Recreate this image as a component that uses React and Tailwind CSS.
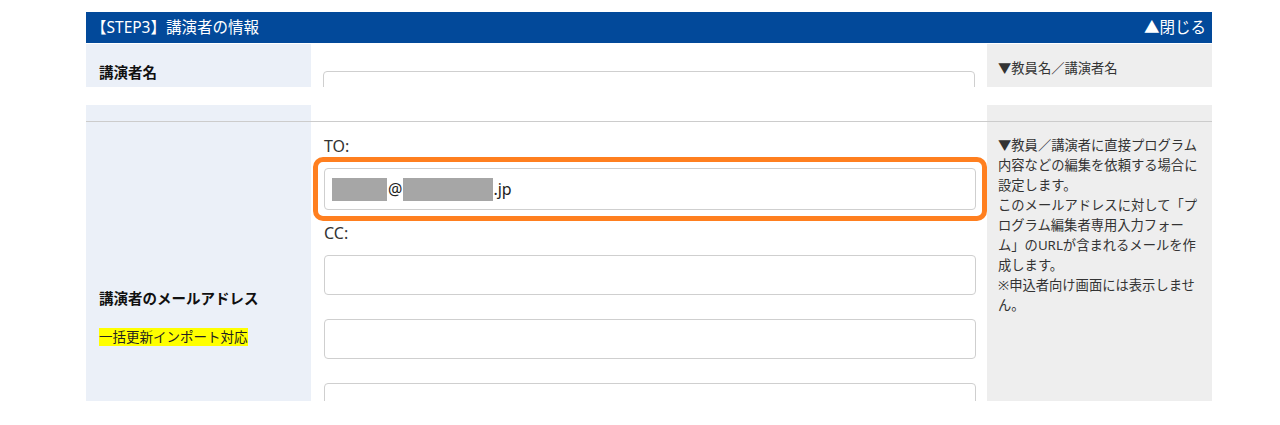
const font = { fontFamily: '"Noto Sans", "Noto Sans CJK JP", sans-serif' };

function TextBox({ children, className = "" }) {
  return (
    <div
      className={
        "h-[40px] w-full rounded-[4px] border border-[#cfcfcf] bg-white flex items-center px-[7px] text-[16px] text-[#222] " +
        className
      }
    >
      {children}
    </div>
  );
}

function Masked({ w }) {
  return <span className="inline-block h-[23px] bg-[#a6a6a6]" style={{ width: w }} />;
}

export default function App() {
  return (
    <div className="min-h-[425px] bg-white pt-[12px]" style={font}>
      <div className="ml-[86px] w-[1126px]">
        {/* section header */}
        <div className="h-[31px] bg-[#02499a] flex items-center justify-between pl-[5px] pr-[6px] text-white text-[15.5px]">
          <span>【STEP3】講演者の情報</span>
          <span>▲閉じる</span>
        </div>

        {/* 講演者名 */}
        <div className="mt-px flex h-[43px] overflow-hidden">
          <div className="w-[225px] shrink-0 bg-[#ebf0f8] pl-[13px] pt-[18px] text-[14.5px] font-bold leading-[20px] text-[#111]">
            講演者名
          </div>
          <div className="w-[676px] shrink-0 pl-[12px] pr-[12px] pt-[27px]">
            <TextBox />
          </div>
          <div className="w-[225px] shrink-0 bg-[#eeeeee] pl-[11px] pt-[14px] text-[13.3px] leading-[20px] text-[#333]">
            ▼教員名／講演者名
          </div>
        </div>

        <div className="mt-[18px] flex h-[16px]">
          <div className="w-[225px] bg-[#ebf0f8]" />
          <div className="w-[676px]" />
          <div className="w-[225px] bg-[#eeeeee]" />
        </div>
        <div className="h-px bg-[#cccccc]" />

        {/* 講演者のメールアドレス */}
        <div className="flex h-[279px] overflow-hidden">
          <div className="w-[225px] shrink-0 bg-[#ebf0f8] pl-[13px] pt-[166px]">
            <div className="text-[14.5px] font-bold leading-[20px] text-[#111]">講演者のメールアドレス</div>
            <div className="mt-[19px] text-[13.5px] leading-[20px] text-[#222]">
              <span className="bg-[#ffff00]">一括更新インポート対応</span>
            </div>
          </div>

          <div className="w-[676px] shrink-0 pl-[13px] pr-[11px] pt-[13px] text-[16px] text-[#333]">
            <div className="leading-[22px]">TO:</div>
            <div className="-mx-[11px] rounded-[10px] border-[5px] border-[#ff7f1f] p-[6px]">
              <TextBox className="h-[42px]">
                <Masked w={55} />
                <span className="px-[1px]">@</span>
                <Masked w={90} />
                <span>.jp</span>
              </TextBox>
            </div>
            <div className="mt-[1px] leading-[22px]">CC:</div>
            <div className="mt-[11px] flex flex-col gap-[24px]">
              <TextBox />
              <TextBox />
              <TextBox />
            </div>
          </div>

          <div className="w-[225px] shrink-0 bg-[#eeeeee] pl-[11px] pt-[13px] text-[13.3px] leading-[20px] text-[#333] whitespace-nowrap">
            <p>
              ▼教員／講演者に直接プログラム
              <br />
              内容などの編集を依頼する場合に
              <br />
              設定します。
            </p>
            <p>
              このメールアドレスに対して「プ
              <br />
              ログラム編集者専用入力フォー
              <br />
              ム」のURLが含まれるメールを作
              <br />
              成します。
            </p>
            <p>
              ※申込者向け画面には表示しませ
              <br />
              ん。
            </p>
          </div>
        </div>
      </div>
    </div>
  );
}
